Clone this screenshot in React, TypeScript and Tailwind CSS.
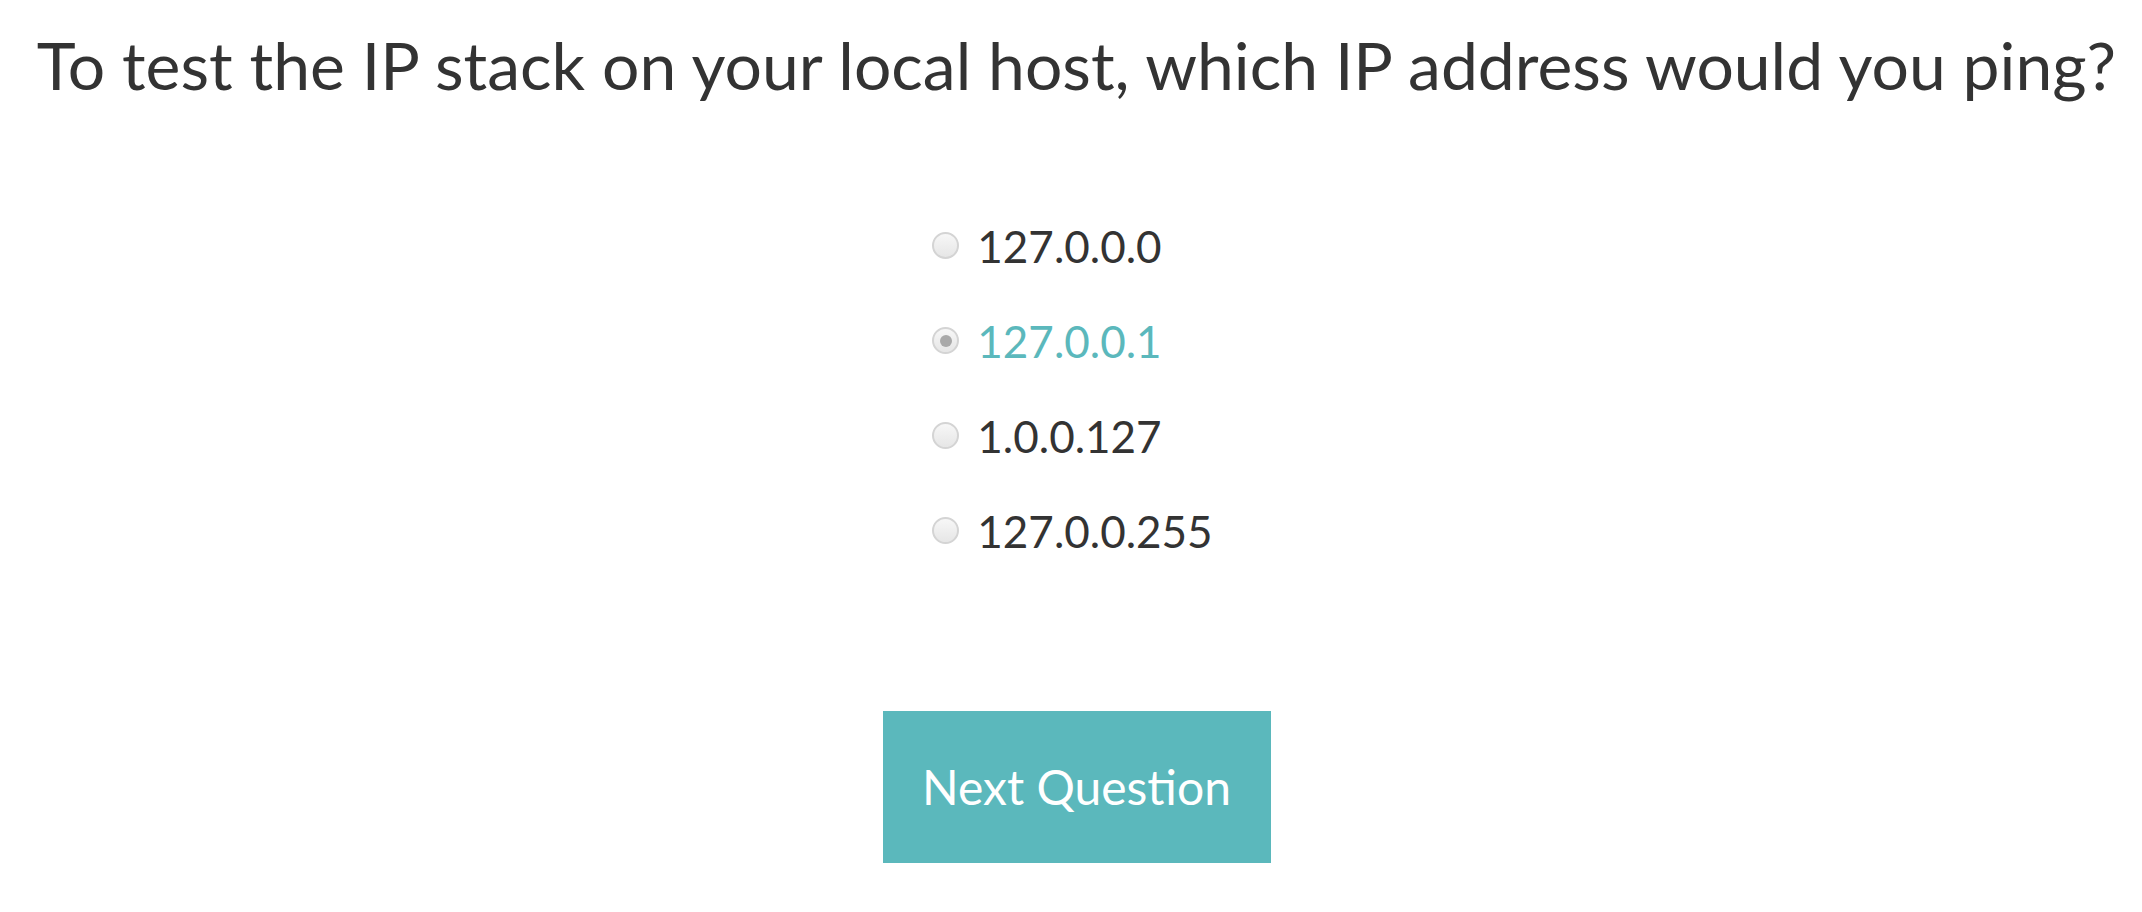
import { useState } from 'react';

const options = ['127.0.0.0', '127.0.0.1', '1.0.0.127', '127.0.0.255'];

export default function App() {
  const [selected, setSelected] = useState<string>('127.0.0.1');

  return (
    <div
      className="min-h-screen bg-white flex flex-col items-center pl-[11px] text-[#333333]"
      style={{ fontFamily: 'Lato, "Open Sans", sans-serif' }}
    >
      <h1 className="pt-[25px] text-[66px] leading-[80px] font-normal text-center whitespace-nowrap">
        To test the IP stack on your local host, which IP address would you ping?
      </h1>

      <div className="mt-[93px] pr-[8px] flex flex-col">
        {options.map((opt) => (
          <label
            key={opt}
            className="h-[95px] flex items-center gap-[18px] cursor-pointer"
            onClick={() => setSelected(opt)}
          >
            <RadioDot checked={selected === opt} />
            <span
              className={
                'text-[44px] leading-none ' +
                (selected === opt ? 'text-[#5bb8bc]' : 'text-[#333333]')
              }
            >
              {opt}
            </span>
          </label>
        ))}
      </div>

      <button
        type="button"
        className="mt-[133px] w-[388px] h-[152px] flex items-center justify-center bg-[#5bb8bc] text-white text-[48px] leading-none"
      >
        Next Question
      </button>
    </div>
  );
}

const RadioDot = ({ checked }: { checked: boolean }) => {
  return (
    <span className="w-[27px] h-[27px] rounded-full border-2 border-[#d4d4d4] bg-gradient-to-b from-[#f7f7f7] to-[#e6e6e6] flex items-center justify-center shrink-0">
      {checked && <span className="w-[12px] h-[12px] rounded-full bg-[#a9a9a9]" />}
    </span>
  );
};
